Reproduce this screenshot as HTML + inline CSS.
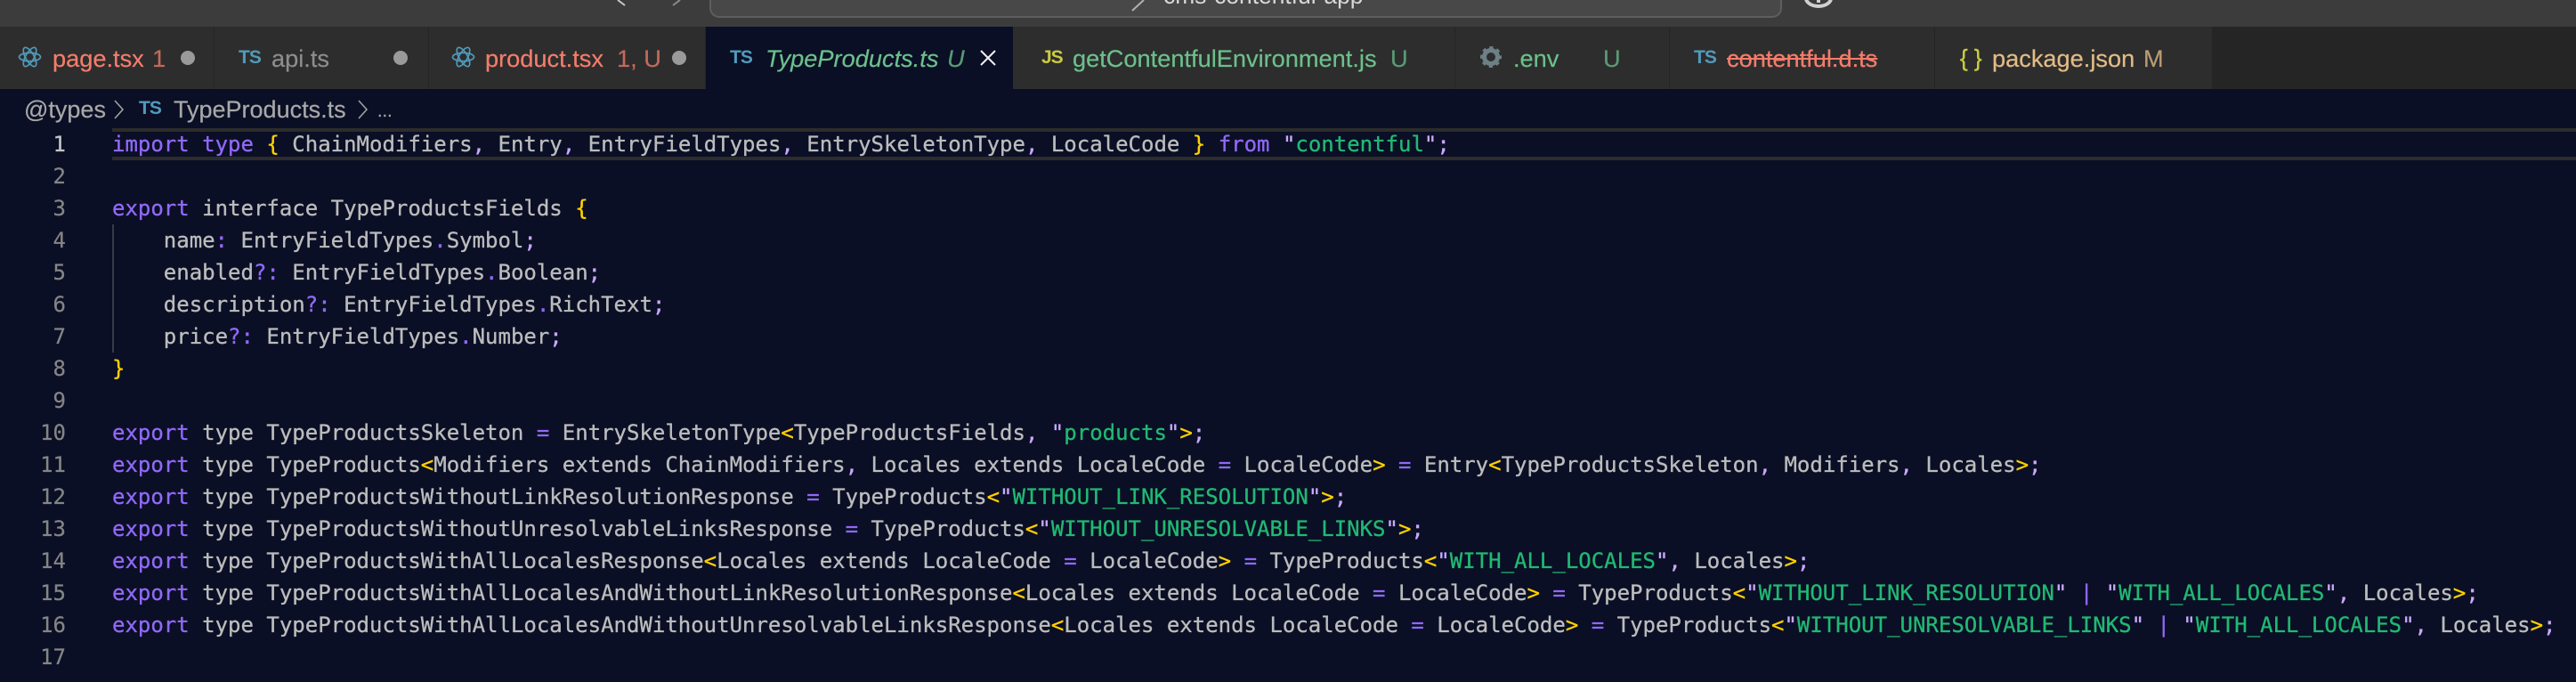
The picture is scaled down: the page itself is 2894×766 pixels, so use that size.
<!DOCTYPE html>
<html>
<head>
<meta charset="utf-8">
<style>
html,body{margin:0;padding:0;background:#0a0f25;}
body{position:relative;width:2894px;height:766px;overflow:hidden;font-family:"Liberation Sans",sans-serif;}
.a{position:absolute;white-space:pre;}
.bar{position:absolute;left:0;top:0;width:2894px;height:30px;background:#3c3c3c;}
.tabs{position:absolute;left:0;top:30px;width:2894px;height:70px;background:#252525;}
.tab{position:absolute;top:30px;height:70px;background:#2d2d2d;}
.t{position:absolute;white-space:pre;font-size:27.2px;line-height:36px;top:48px;-webkit-text-stroke:.2px currentColor;}
.ic{position:absolute;white-space:pre;font-weight:bold;font-size:21px;line-height:24px;top:53px;letter-spacing:-1px;color:#519aba;}
.dot{position:absolute;width:16px;height:16px;border-radius:50%;background:#9a9a9a;top:57px;}
.r{color:#f57c6b}.rd{color:#c4695d}.g{color:#6cc08b}.gd{color:#5a9b74}
.ln{position:absolute;left:0;width:74px;text-align:right;font-family:"DejaVu Sans Mono",monospace;font-size:24px;line-height:36px;color:#858585;-webkit-text-stroke:.2px currentColor;}
.c{position:absolute;left:126px;white-space:pre;font-family:"DejaVu Sans Mono",monospace;font-size:24px;line-height:36px;color:#bcbcbc;-webkit-text-stroke:.3px currentColor;}
.k{color:#9168f8}.p{color:#c9a9ff}.b{color:#ffd000}.s{color:#21b973}
.bc{font-size:27px;line-height:36px;color:#a8a8a8;top:105px;-webkit-text-stroke:.2px currentColor;}
</style>
</head>
<body>
<div class="bar"></div>
<div class="a" style="left:797px;top:-20px;width:1201px;height:36px;background:#484848;border:2px solid #5e5e5e;border-radius:11px;"></div>
<div class="a" style="left:1307px;top:-23px;font-size:26.4px;line-height:36px;color:#d8d8d8;">cms-contentful-app</div>
<svg class="a" style="left:0;top:0;" width="2894" height="30" viewBox="0 0 2894 30">
<path d="M694 0L702 6" stroke="#c8c8c8" stroke-width="2" fill="none"/>
<path d="M756 6L764 0" stroke="#8a8a8a" stroke-width="2" fill="none"/>
<path d="M1272 12L1285 0" stroke="#b0b0b0" stroke-width="2" fill="none"/>
<ellipse cx="2043" cy="-2" rx="16" ry="11" fill="#d0d0d0"/>
<ellipse cx="2043" cy="-2" rx="12" ry="7" fill="#3c3c3c"/>
<rect x="2041" y="0" width="4" height="3" fill="#d0d0d0"/>
</svg>

<div class="tabs"></div>
<div class="tab" style="left:0;width:240px;"></div>
<div class="tab" style="left:241px;width:240px;"></div>
<div class="tab" style="left:482px;width:310px;"></div>
<div class="tab" style="left:793px;width:345px;background:#0a0f25;"></div>
<div class="tab" style="left:1138px;width:496px;"></div>
<div class="tab" style="left:1635px;width:240px;"></div>
<div class="tab" style="left:1876px;width:297px;"></div>
<div class="tab" style="left:2174px;width:311px;"></div>

<svg class="a" style="left:0;top:0;" width="2894" height="140" viewBox="0 0 2894 140">
<g fill="none" stroke="#519aba" stroke-width="1.7">
<g transform="translate(33.500 64)"><ellipse rx="12" ry="4.700"/><ellipse rx="12" ry="4.700" transform="rotate(60)"/><ellipse rx="12" ry="4.700" transform="rotate(120)"/></g>
<g transform="translate(520.500 64)"><ellipse rx="12" ry="4.700"/><ellipse rx="12" ry="4.700" transform="rotate(60)"/><ellipse rx="12" ry="4.700" transform="rotate(120)"/></g>
</g>
<g fill="none" stroke="#6d8086">
<circle cx="1675" cy="64" r="7.500" stroke-width="5"/>
<circle cx="1675" cy="64" r="10.500" stroke-width="3" stroke-dasharray="4.100 4.147" stroke-dashoffset="2"/>
</g>
<path d="M1102 57L1118 73M1118 57L1102 73" stroke="#f0f0f0" stroke-width="2" fill="none"/>
<path d="M129 113L138 123L129 133M403 113L412 123L403 133" stroke="#a0a0a0" stroke-width="1.600" fill="none"/>
</svg>

<div class="t r" style="left:59px;">page.tsx</div>
<div class="t rd" style="left:171px;">1</div>
<div class="dot" style="left:203px;"></div>

<div class="ic" style="left:268px;">TS</div>
<div class="t" style="left:305px;color:#8d8d8d;">api.ts</div>
<div class="dot" style="left:442px;"></div>

<div class="t r" style="left:545px;">product.tsx</div>
<div class="t rd" style="left:693px;">1, U</div>
<div class="dot" style="left:755px;"></div>

<div class="ic" style="left:820px;">TS</div>
<div class="t g" style="left:860px;font-style:italic;">TypeProducts.ts</div>
<div class="t gd" style="left:1064px;font-style:italic;">U</div>

<div class="ic" style="left:1170px;color:#cbcb41;">JS</div>
<div class="t g" style="left:1205px;">getContentfulEnvironment.js</div>
<div class="t gd" style="left:1562px;">U</div>

<div class="t g" style="left:1700px;">.env</div>
<div class="t gd" style="left:1801px;">U</div>

<div class="ic" style="left:1903px;">TS</div>
<div class="t r" style="left:1940px;text-decoration:line-through;">contentful.d.ts</div>

<div class="a" style="left:2202px;top:48px;font-size:26px;line-height:34px;color:#cbcb41;-webkit-text-stroke:.4px currentColor;">{ }</div>
<div class="t" style="left:2238px;color:#e2bb85;">package.json</div>
<div class="t" style="left:2408px;color:#b89c74;">M</div>

<div class="a bc" style="left:27px;">@types</div>
<div class="ic" style="left:156px;top:110px;">TS</div>
<div class="a bc" style="left:195px;">TypeProducts.ts</div>
<div class="a bc" style="left:424px;top:107px;font-size:20px;">...</div>

<div class="a" style="left:126px;top:144px;width:2768px;height:28px;border-top:4px solid #2c2c2c;border-bottom:4px solid #2c2c2c;"></div>
<div class="a" style="left:126px;top:252px;width:2px;height:144px;background:#373a47;"></div>

<div class="ln" style="top:144px;color:#c6c6c6;">1</div>
<div class="ln" style="top:180px;">2</div>
<div class="ln" style="top:216px;">3</div>
<div class="ln" style="top:252px;">4</div>
<div class="ln" style="top:288px;">5</div>
<div class="ln" style="top:324px;">6</div>
<div class="ln" style="top:360px;">7</div>
<div class="ln" style="top:396px;">8</div>
<div class="ln" style="top:432px;">9</div>
<div class="ln" style="top:468px;">10</div>
<div class="ln" style="top:504px;">11</div>
<div class="ln" style="top:540px;">12</div>
<div class="ln" style="top:576px;">13</div>
<div class="ln" style="top:612px;">14</div>
<div class="ln" style="top:648px;">15</div>
<div class="ln" style="top:684px;">16</div>
<div class="ln" style="top:720px;">17</div>

<div class="c" style="top:144px;"><span class="k">import</span> <span class="k">type</span> <span class="b">{</span> ChainModifiers<span class="p">,</span> Entry<span class="p">,</span> EntryFieldTypes<span class="p">,</span> EntrySkeletonType<span class="p">,</span> LocaleCode <span class="b">}</span> <span class="k">from</span> <span class="p">"</span><span class="s">contentful</span><span class="p">";</span></div>
<div class="c" style="top:216px;"><span class="k">export</span> interface TypeProductsFields <span class="b">{</span></div>
<div class="c" style="top:252px;">    name<span class="k">:</span> EntryFieldTypes<span class="k">.</span>Symbol<span class="p">;</span></div>
<div class="c" style="top:288px;">    enabled<span class="k">?:</span> EntryFieldTypes<span class="k">.</span>Boolean<span class="p">;</span></div>
<div class="c" style="top:324px;">    description<span class="k">?:</span> EntryFieldTypes<span class="k">.</span>RichText<span class="p">;</span></div>
<div class="c" style="top:360px;">    price<span class="k">?:</span> EntryFieldTypes<span class="k">.</span>Number<span class="p">;</span></div>
<div class="c" style="top:396px;"><span class="b">}</span></div>
<div class="c" style="top:468px;"><span class="k">export</span> type TypeProductsSkeleton <span class="k">=</span> EntrySkeletonType<span class="b">&lt;</span>TypeProductsFields<span class="p">,</span> <span class="p">"</span><span class="s">products</span><span class="p">"</span><span class="b">&gt;</span><span class="p">;</span></div>
<div class="c" style="top:504px;"><span class="k">export</span> type TypeProducts<span class="b">&lt;</span>Modifiers extends ChainModifiers<span class="p">,</span> Locales extends LocaleCode <span class="k">=</span> LocaleCode<span class="b">&gt;</span> <span class="k">=</span> Entry<span class="b">&lt;</span>TypeProductsSkeleton<span class="p">,</span> Modifiers<span class="p">,</span> Locales<span class="b">&gt;</span><span class="p">;</span></div>
<div class="c" style="top:540px;"><span class="k">export</span> type TypeProductsWithoutLinkResolutionResponse <span class="k">=</span> TypeProducts<span class="b">&lt;</span><span class="p">"</span><span class="s">WITHOUT_LINK_RESOLUTION</span><span class="p">"</span><span class="b">&gt;</span><span class="p">;</span></div>
<div class="c" style="top:576px;"><span class="k">export</span> type TypeProductsWithoutUnresolvableLinksResponse <span class="k">=</span> TypeProducts<span class="b">&lt;</span><span class="p">"</span><span class="s">WITHOUT_UNRESOLVABLE_LINKS</span><span class="p">"</span><span class="b">&gt;</span><span class="p">;</span></div>
<div class="c" style="top:612px;"><span class="k">export</span> type TypeProductsWithAllLocalesResponse<span class="b">&lt;</span>Locales extends LocaleCode <span class="k">=</span> LocaleCode<span class="b">&gt;</span> <span class="k">=</span> TypeProducts<span class="b">&lt;</span><span class="p">"</span><span class="s">WITH_ALL_LOCALES</span><span class="p">",</span> Locales<span class="b">&gt;</span><span class="p">;</span></div>
<div class="c" style="top:648px;"><span class="k">export</span> type TypeProductsWithAllLocalesAndWithoutLinkResolutionResponse<span class="b">&lt;</span>Locales extends LocaleCode <span class="k">=</span> LocaleCode<span class="b">&gt;</span> <span class="k">=</span> TypeProducts<span class="b">&lt;</span><span class="p">"</span><span class="s">WITHOUT_LINK_RESOLUTION</span><span class="p">"</span> <span class="k">|</span> <span class="p">"</span><span class="s">WITH_ALL_LOCALES</span><span class="p">",</span> Locales<span class="b">&gt;</span><span class="p">;</span></div>
<div class="c" style="top:684px;"><span class="k">export</span> type TypeProductsWithAllLocalesAndWithoutUnresolvableLinksResponse<span class="b">&lt;</span>Locales extends LocaleCode <span class="k">=</span> LocaleCode<span class="b">&gt;</span> <span class="k">=</span> TypeProducts<span class="b">&lt;</span><span class="p">"</span><span class="s">WITHOUT_UNRESOLVABLE_LINKS</span><span class="p">"</span> <span class="k">|</span> <span class="p">"</span><span class="s">WITH_ALL_LOCALES</span><span class="p">",</span> Locales<span class="b">&gt;</span><span class="p">;</span></div>
</body>
</html>
